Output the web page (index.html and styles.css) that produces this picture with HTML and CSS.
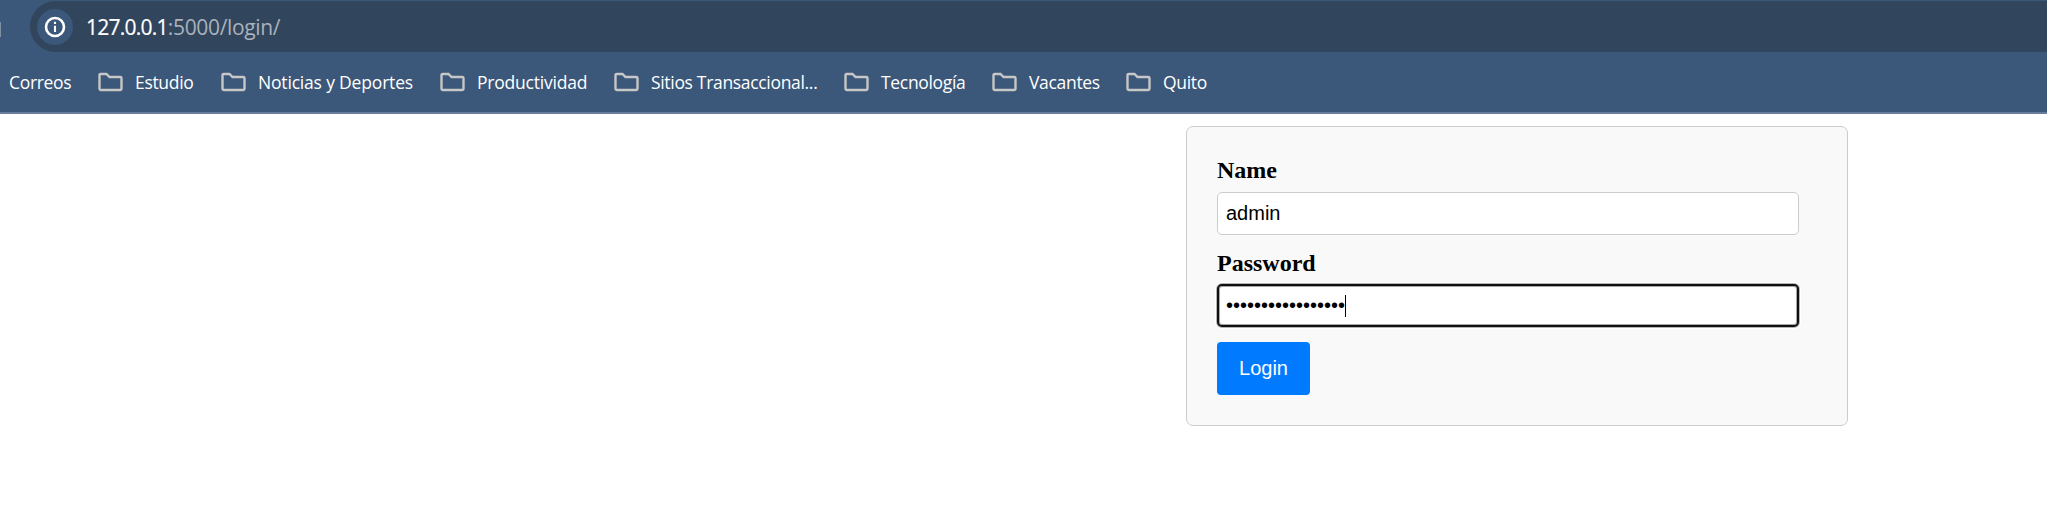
FILE: index.html
```html
<!DOCTYPE html>
<html lang="es">
<head>
<meta charset="utf-8">
<title>Login</title>
<link rel="stylesheet" href="styles.css">
</head>
<body>
<svg class="defs" width="0" height="0"><symbol id="folder" viewBox="0 0 25 20"><path d="M2.6 2H8.5L11.5 5H22.3Q23.5 5 23.5 6.2V16.8Q23.5 18 22.3 18H2.7Q1.5 18 1.5 16.8V3.1Q1.5 2 2.6 2Z" fill="none" stroke="#c7c7c7" stroke-width="2.4"/></symbol></svg>
<header class="chrome">
  <div class="toolbar">
    <span class="edge"></span>
    <div class="address">
      <span class="info"><svg width="22" height="22" viewBox="0 0 22 22"><circle cx="11" cy="11" r="9" fill="none" stroke="#fff" stroke-width="2.6"/><path d="M11 9.8V16M11 5.8V8" stroke="#fff" stroke-width="2.1"/></svg></span>
      <span class="url"><span class="host">127.0.0.1</span><span class="path">:5000/login/</span></span>
    </div>
  </div>
  <nav class="bookmarks">
    <span class="item"><span class="t">Correos</span></span>
    <span class="item"><svg class="folder"><use href="#folder"/></svg><span class="t">Estudio</span></span>
    <span class="item"><svg class="folder"><use href="#folder"/></svg><span class="t noticias">Noticias y Deportes</span></span>
    <span class="item"><svg class="folder"><use href="#folder"/></svg><span class="t productividad">Productividad</span></span>
    <span class="item"><svg class="folder"><use href="#folder"/></svg><span class="t">Sitios Transaccional...</span></span>
    <span class="item"><svg class="folder"><use href="#folder"/></svg><span class="t">Tecnología</span></span>
    <span class="item"><svg class="folder"><use href="#folder"/></svg><span class="t">Vacantes</span></span>
    <span class="item"><svg class="folder"><use href="#folder"/></svg><span class="t">Quito</span></span>
  </nav>
</header>
<main class="page">
  <form class="card">
    <label class="label">Name</label>
    <div class="field">admin</div>
    <label class="label second">Password</label>
    <div class="field focused"><span class="dots">•••••••••••••••••</span><span class="caret"></span></div>
    <button class="login" type="button">Login</button>
  </form>
</main>
</body>
</html>
```
FILE: styles.css
```css
* { box-sizing: border-box; }
body { margin: 0; background: #fff; overflow: hidden; }
.defs { display: block; }
.chrome { height: 114px; background: #3b5779; border-bottom: 2px solid #667d99; font-family: "Open Sans", "Noto Sans", sans-serif; }
.toolbar { height: 52px; padding-top: 1px; display: flex; }
.edge { width: 1px; height: 15px; margin: 21px 29px 0 0; background: #8190a3; }
.address { flex: 1; height: 51px; border-radius: 26px 0 0 26px; background: #31455c; display: flex; align-items: center; padding-left: 7px; }
.info { width: 36px; height: 36px; border-radius: 50%; background: #3b5779; display: flex; align-items: center; justify-content: center; }
.url { margin-left: 13px; font-size: 21px; line-height: 30px; white-space: nowrap; display: flex; }
.host { color: #fff; letter-spacing: -0.75px; -webkit-text-stroke: 0.2px #fff; }
.path { color: #a9b2bd; letter-spacing: -0.35px; }
.bookmarks { height: 59px; padding-left: 9px; display: grid; grid-template-columns: 89px 123px 219px 174px 230px 148px 134px 100px; align-items: center; color: #fff; font-size: 17.5px; line-height: 24px; }
.item { display: flex; align-items: center; white-space: nowrap; }
.folder { width: 25px; height: 20px; margin: 1px 12px 0 0; flex: none; }
.t { letter-spacing: -0.32px; }
.noticias { letter-spacing: -0.18px; }
.productividad { letter-spacing: -0.22px; }
.page { display: flex; padding: 12px 199px 0 0; justify-content: flex-end; }
.card { width: 662px; height: 300px; border: 1px solid #ccc; border-radius: 7px; background: #f9f9f9; padding: 30px; }
.label { display: block; font: bold 24px/27px "Liberation Serif", serif; color: #000; margin-bottom: 8px; }
.second { margin-top: 15px; margin-bottom: 7px; }
.field { width: 582px; height: 43px; border: 1px solid #ccc; border-radius: 5px; background: #fff; padding-left: 8px; font: 20px/41px "Liberation Sans", sans-serif; color: #000; display: flex; align-items: center; }
.focused { border: 2px solid #101010; padding-left: 7px; line-height: 38px; box-shadow: 0 0 0 1px #b5b5b5, 0 0 0 2px #fff, inset 0 0 0 1px #a5a5a5; }
.dots { height: 39px; }
.caret { width: 1px; height: 22px; background: #000; }
.login { display: block; width: 93px; height: 53px; margin-top: 15px; padding: 0; border: 0; border-radius: 4px; background: #007bff; color: #fff; font: 20px "Liberation Sans", sans-serif; }
```
